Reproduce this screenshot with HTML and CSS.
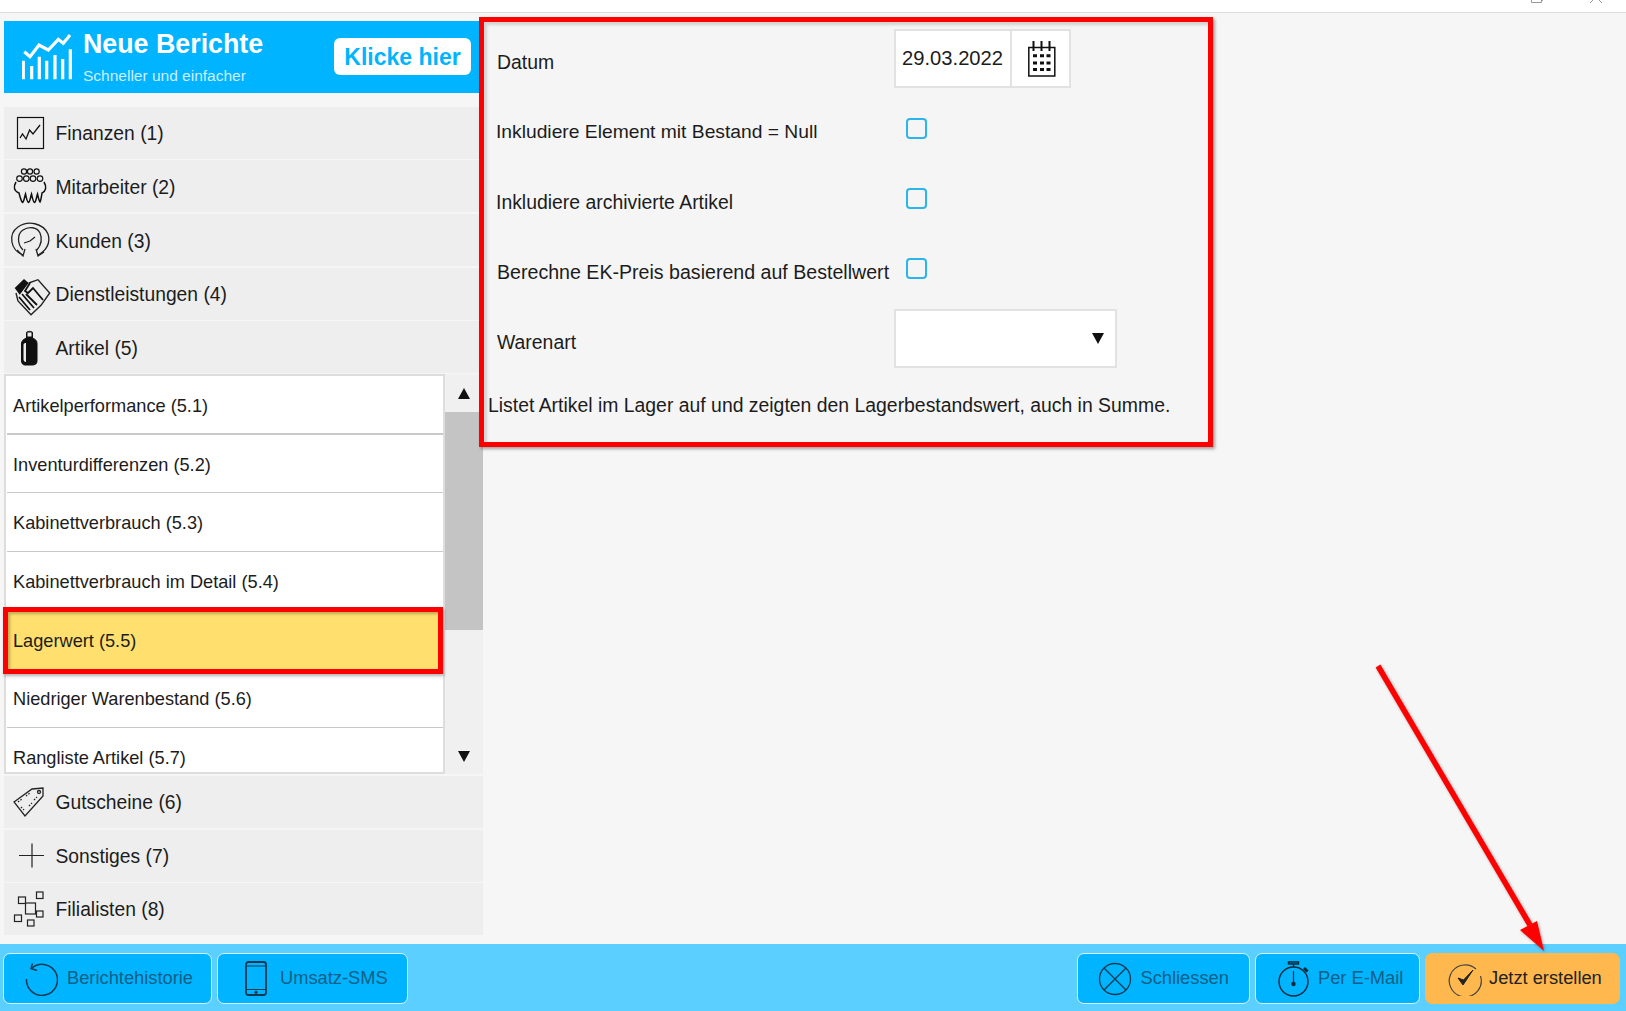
FILE: index.html
```html
<!DOCTYPE html>
<html lang="de">
<head>
<meta charset="utf-8">
<title>Berichte</title>
<link rel="stylesheet" href="styles.css">
</head>
<body>
<div class="page">
  <header class="topbar">
    <svg class="win win-restore" viewBox="0 0 12 3"><path d="M.5 0V2.5H10.5V0M10.5 .5H11.5V0" fill="none" stroke="#999"/></svg>
    <svg class="win win-close" viewBox="0 0 12 3"><path d="M0 3L3 0M12 3L9 0" fill="none" stroke="#999"/></svg>
  </header>

  <main class="main">
    <aside class="sidebar">
      <div class="banner">
        <svg class="banner-icon" viewBox="0 0 52 47" fill="none" stroke="#fff">
          <path d="M2.300 17.700L8 22.700 17 11 26.300 16 36.300 5.300 41.300 9.300 48 1" stroke-width="3.200"/>
          <path d="M1.300 45.300V26.700M9.700 45.300V32M17.300 45.300V22.700M24.700 45.300V26.700M33 45.300V21M40.700 45.300V25M48.300 45.300V15.300" stroke-width="3.200"/>
        </svg>
        <div class="banner-text">
          <div class="banner-title">Neue Berichte</div>
          <div class="banner-sub">Schneller und einfacher</div>
        </div>
        <div class="banner-btn">Klicke hier</div>
      </div>

      <div class="row">
        <svg class="row-icon" viewBox="0 0 48 52" fill="none" stroke="#111">
          <rect x="9.5" y="10.5" width="26" height="31" stroke-width="1.2"/>
          <path d="M12 31L14.5 27 18 32 21.6 23 25 27 32 18" stroke-width="1.3"/>
        </svg>
        <span>Finanzen (1)</span>
      </div>
      <div class="row">
        <svg class="row-icon" viewBox="0 0 48 52" fill="none" stroke="#111" stroke-width="1.2">
          <circle cx="16" cy="11.5" r="2.6"/><circle cx="22" cy="11.5" r="2.6"/><circle cx="28.6" cy="11.5" r="2.6"/>
          <circle cx="11.5" cy="18.6" r="2.8"/><circle cx="18.3" cy="18.6" r="2.8"/><circle cx="25" cy="18.6" r="2.8"/><circle cx="32" cy="18.6" r="2.8"/>
          <path d="M8 22C5 27 6 31 11 33C12 37 13 41 14.500 42.500C16 42 16.500 37 17.500 34C18.500 38 19 42 20.500 42.500C22 42 22.500 37 23.500 34C24.500 38 25 42 26.500 42.500C28 42 28.500 37 29.500 34C30.500 38 31 41 32 42C33 40 33.500 36 34 33C38 31 39 27 36 22" stroke-width="1.500"/>
        </svg>
        <span>Mitarbeiter (2)</span>
      </div>
      <div class="row">
        <svg class="row-icon" viewBox="0 0 48 52" fill="none" stroke="#222" stroke-width="1.3">
          <path d="M15 41C2 36 0 20 10 13 20 6 35 9 40 20 43 29 38 37 30 41"/>
          <path d="M15 36C9 30 9 20 15 16 21 12 29 13 32 19 35 26 33 31 29 36"/>
          <path d="M9 36L15 42 17 35M28 35L30 42 36 38"/>
          <path d="M16 29L22 27 27 23"/>
        </svg>
        <span>Kunden (3)</span>
      </div>
      <div class="row">
        <svg class="row-icon" viewBox="0 0 48 52">
          <path d="M20.700 15L30 11.700 41.700 25 33 37.300 23 46.700 10 33 8 25" fill="#eee" stroke="#222" stroke-width="1.400"/>
          <path d="M22 15L17 23 20 25 25 20 35 32M11 29L22 42M14 26L26 40M18 26L29 37" fill="none" stroke="#111" stroke-width="1.800"/>
          <path d="M6.700 20L16 11 20.700 15 11.700 26.700Z" fill="#111"/>
        </svg>
        <span>Dienstleistungen (4)</span>
      </div>
      <div class="row">
        <svg class="row-icon" viewBox="0 0 48 52">
          <path d="M18.5 11.5C18.5 10 24.5 10 24.5 11.5V17C28 18.5 29 20 29 23V40C29 43 27 44 24 44H17C14.500 44 13.500 42 13.500 40V23C13.500 20 15 18.500 18.500 17Z" fill="#111" stroke="#111"/>
          <path d="M15.500 24V38C15.500 40 16.500 41 18 41V22C16.500 22 15.500 22.500 15.500 24Z" fill="#eee"/>
          <rect x="19.500" y="11.500" width="4" height="4" fill="#eee"/>
        </svg>
        <span>Artikel (5)</span>
      </div>

      <div class="list-wrap">
        <ul class="list">
          <li class="item item-first">Artikelperformance (5.1)</li>
          <li class="item">Inventurdifferenzen (5.2)</li>
          <li class="item">Kabinettverbrauch (5.3)</li>
          <li class="item">Kabinettverbrauch im Detail (5.4)</li>
          <li class="item item-selected">Lagerwert (5.5)</li>
          <li class="item">Niedriger Warenbestand (5.6)</li>
          <li class="item">Rangliste Artikel (5.7)</li>
        </ul>
        <div class="scrollbar">
          <span class="arrow-up"></span>
          <div class="thumb"></div>
          <span class="arrow-down"></span>
        </div>
      </div>

      <div class="row">
        <svg class="row-icon" viewBox="0 0 48 52" fill="none" stroke="#222" stroke-width="1.3">
          <path d="M6 26L24 13 35 12V20L17 40Z"/>
          <circle cx="31" cy="16" r="1.500"/>
          <path d="M10 26L14 23M18 20L22 17M13 31L16 34M21 30L24 27M26 24L29 21" stroke-dasharray="1.500 1.500"/>
        </svg>
        <span>Gutscheine (6)</span>
      </div>
      <div class="row">
        <svg class="row-icon" viewBox="0 0 48 52" fill="none" stroke="#222" stroke-width="1.200">
          <path d="M11 25.500H36M24 13.500V37.500"/>
        </svg>
        <span>Sonstiges (7)</span>
      </div>
      <div class="row">
        <svg class="row-icon" viewBox="0 0 48 52" fill="none" stroke="#222" stroke-width="1.200">
          <rect x="17.500" y="20" width="10" height="11"/>
          <rect x="10.500" y="14" width="7" height="6.500"/>
          <rect x="28.500" y="9" width="6.500" height="6.500"/>
          <rect x="28.500" y="28" width="6.500" height="6"/>
          <rect x="6.500" y="32" width="7" height="6.500"/>
          <rect x="19.500" y="37" width="6.500" height="6"/>
        </svg>
        <span>Filialisten (8)</span>
      </div>
    </aside>

    <section class="panel">
      <div class="form-row">
        <label class="form-label">Datum</label>
        <div class="date-box">
          <span class="date-value">29.03.2022</span>
          <span class="date-btn">
            <svg class="cal-icon" viewBox="0 0 28 36" fill="none" stroke="#111">
              <rect x=".8" y="6.500" width="26" height="28.500" stroke-width="1.500"/>
              <path d="M5.500 0V10M13.500 0V10M21.500 0V10" stroke-width="2"/>
              <path d="M5 14.700H9M12 14.700H16M18.500 14.700H22.500M5 22H9M12 22H16M18.500 22H22.500M5 28.500H9M12 28.500H16M18.500 28.500H22.500" stroke-width="3"/>
            </svg>
          </span>
        </div>
      </div>
      <div class="form-row">
        <label class="form-label form-label-tight">Inkludiere Element mit Bestand = Null</label>
        <span class="check"></span>
      </div>
      <div class="form-row">
        <label class="form-label form-label-shift">Inkludiere archivierte Artikel</label>
        <span class="check"></span>
      </div>
      <div class="form-row">
        <label class="form-label form-label-wide">Berechne EK-Preis basierend auf Bestellwert</label>
        <span class="check"></span>
      </div>
      <div class="form-row">
        <label class="form-label">Warenart</label>
        <div class="select-box"><span class="select-arrow"></span></div>
      </div>
      <p class="form-note">Listet Artikel im Lager auf und zeigten den Lagerbestandswert, auch in Summe.</p>
    </section>
  </main>

  <footer class="footer">
    <div class="btn-group">
      <div class="btn btn-history">
        <svg class="btn-icon icon-history" viewBox="0 0 34 34" fill="none" stroke="#0d3a52" stroke-width="1.500">
          <path d="M8 6A15.500 15.500 0 1 1 2.500 17"/>
          <path d="M8.500 1.500L7 6.500 13 8.500"/>
        </svg>
        <span>Berichtehistorie</span>
      </div>
      <div class="btn btn-sms">
        <svg class="btn-icon icon-phone" viewBox="0 0 22 35" fill="none" stroke="#0d3a52">
          <rect x="1" y="1" width="20" height="33" rx="2.500" stroke-width="1.800"/>
          <path d="M1 5H21M1 28.500H21" stroke-width="1.200"/>
          <circle cx="11" cy="31.300" r="1.200" fill="#0d3a52"/>
        </svg>
        <span>Umsatz-SMS</span>
      </div>
    </div>
    <div class="btn-group">
      <div class="btn btn-close">
        <svg class="btn-icon icon-close" viewBox="0 0 34 34" fill="none" stroke="#0d3a52" stroke-width="1.300">
          <circle cx="17" cy="17" r="15.500"/>
          <path d="M6 6L28 28M28 6L6 28"/>
        </svg>
        <span>Schliessen</span>
      </div>
      <div class="btn btn-mail">
        <svg class="btn-icon icon-watch" viewBox="0 0 32 36" fill="none" stroke="#06293c" stroke-width="1.400">
          <circle cx="15.500" cy="20.500" r="14.500"/>
          <path d="M10.500 1H20.500V3H10.500ZM15.500 3V6"/>
          <path d="M26 7L29.500 10.500" stroke-width="3"/>
          <path d="M15.500 10V24" stroke-width="1.200"/>
          <circle cx="15.500" cy="23" r="1.500" fill="#06293c"/>
        </svg>
        <span>Per E-Mail</span>
      </div>
      <div class="btn btn-create">
        <svg class="btn-icon icon-check" viewBox="0 0 34 34" fill="none" stroke="#444" stroke-width="1.200">
          <path d="M28 7A16 16 0 1 0 32.500 14"/>
          <path d="M10 16L15 23 25 8 15.500 18Z" fill="#222" stroke="#222" stroke-width="1"/>
        </svg>
        <span>Jetzt erstellen</span>
      </div>
    </div>
  </footer>
</div>

<div class="mark-selected"></div>
<svg class="mark-arrow" viewBox="0 0 1626 1011">
  <path d="M1378 666L1530 925" stroke="#f00" stroke-width="5.500" fill="none"/>
  <path d="M1520 930L1537 921 1544 951Z" fill="#f00"/>
</svg>
</body>
</html>
```

FILE: styles.css
```css
* { box-sizing: border-box; }
html, body { margin: 0; padding: 0; }
body {
  width: 1626px;
  height: 1011px;
  overflow: hidden;
  position: relative;
  background: #f6f6f6;
  color: #1c1c1c;
  font-family: "Liberation Sans", Arial, sans-serif;
}
.page { display: flex; flex-direction: column; height: 1011px; }

.topbar {
  height: 13px;
  flex: none;
  background: #fff;
  border-bottom: 1px solid #dcdcdc;
  display: flex;
  justify-content: flex-end;
  align-items: flex-start;
  gap: 47px;
  padding-right: 24px;
}
.win { width: 12px; height: 3px; display: block; }

.main { flex: 1; display: flex; align-items: flex-start; min-height: 0; }
.sidebar { width: 479px; margin-left: 4px; padding-top: 8px; flex: none; }

.banner {
  width: 476px;
  height: 72px;
  background: #00b4ff;
  display: flex;
  align-items: flex-start;
  margin-bottom: 13.7px;
  color: #fff;
}
.banner-icon { width: 52px; height: 47px; margin: 13px 0 0 18px; flex: none; }
.banner-text { margin-left: 9px; padding-top: 8px; flex: none; width: 241px; }
.banner-title { font-size: 26.8px; font-weight: 700; line-height: 31px; }
.banner-sub { font-size: 15.500px; line-height: 19px; margin-top: 5.500px; color: #cfeeff; }
.banner-btn {
  width: 137px;
  height: 37px;
  margin: 17px 0 0 10px;
  background: #fff;
  border-radius: 6px;
  color: #00b4ff;
  font-size: 23px;
  font-weight: 700;
  line-height: 38px;
  text-align: center;
  flex: none;
}

.row {
  height: 52px;
  margin-bottom: 1.67px;
  background: #eee;
  display: flex;
  align-items: center;
  padding-left: 4px;
  font-size: 19.300px;
}
.row span { padding-top: 3px; margin-left: -.5px; }
.list-wrap ~ .row span { padding-top: 2px; }
.row-icon { width: 48px; height: 52px; flex: none; display: block; }

.list-wrap { height: 400px; display: flex; margin-bottom: 2px; margin-top: -1px; background: #eee; }
.list {
  width: 441px;
  flex: none;
  height: 400px;
  margin: 0;
  padding: 0;
  list-style: none;
  overflow: hidden;
  background: #fff;
  border: 2px solid #ddd;
  font-size: 18.200px;
}
.item {
  height: 58.700px;
  margin: 0 0 0 1px;
  padding-left: 6px;
  line-height: 60.500px;
  border-bottom: 1.200px solid #c9c9c9;
  color: #1c1c1c;
}
.item-first { border-bottom-width: 2px; }
.item-selected { background: #ffe06e; border-bottom: 0; }

.scrollbar { flex: 1; position: relative; background: #f0f0f0; }
.thumb { position: absolute; left: 0; right: 0; top: 38px; height: 218px; background: #c4c4c4; }
.arrow-up, .arrow-down { position: absolute; left: 13px; width: 0; height: 0; border-left: 6.500px solid transparent; border-right: 6.500px solid transparent; }
.arrow-up { top: 14px; border-bottom: 11px solid #111; }
.arrow-down { top: 377px; border-top: 11px solid #111; }

.panel {
  width: 734px;
  height: 430px;
  margin: 4px 0 0 -4px;
  position: relative;
  z-index: 1;
  flex: none;
  padding: 5px 0 0 13px;
  background: #f5f5f5;
  border: 5px solid #f00;
  box-shadow: 2px 2px 3px rgba(0,0,0,.35), inset 3px 3px 3px rgba(0,0,0,.14);
  font-size: 19.400px;
}
.form-row { height: 70px; display: flex; align-items: flex-start; }
.form-label { width: 397px; line-height: 70px; flex: none; white-space: nowrap; }
.form-label-tight { font-size: 19.250px; margin-left: -1px; margin-right: 1px; }
.form-label-shift { margin-left: -1px; margin-right: 1px; }
.form-label-wide { font-size: 19.600px; }

.date-box {
  width: 177px;
  height: 59px;
  margin-top: 2px;
  background: #fff;
  border: 2px solid #e2e2e2;
  display: flex;
}
.date-value { width: 116px; flex: none; padding-left: 6px; font-size: 20.200px; line-height: 54px; border-right: 2px solid #e2e2e2; }
.date-btn { flex: 1; display: flex; align-items: center; padding-left: 16px; }
.cal-icon { width: 28px; height: 36px; display: block; }

.check {
  width: 21px;
  height: 21px;
  margin-top: 21px;
  margin-left: 12px;
  flex: none;
  border: 2px solid #2bb5ea;
  border-radius: 4px;
  background: #f5f5f5;
}
.select-box {
  width: 223px;
  height: 59px;
  margin-top: 2px;
  background: #fff;
  border: 2px solid #e2e2e2;
  position: relative;
}
.select-arrow {
  position: absolute;
  right: 11px;
  top: 22px;
  width: 0;
  height: 0;
  border-left: 6.500px solid transparent;
  border-right: 6.500px solid transparent;
  border-top: 11px solid #111;
}
.form-note { margin: 0 0 0 -9px; line-height: 56px; white-space: nowrap; }

.footer {
  height: 67px;
  flex: none;
  background: #5bcfff;
  display: flex;
  justify-content: space-between;
  padding: 9px 6px 7px 3px;
}
.btn-group { display: flex; gap: 5px; }
.btn {
  height: 51px;
  display: flex;
  align-items: center;
  background: #00b4ff;
  border: 1.500px solid #d8f3ff;
  border-radius: 7px;
  color: #0d5f86;
  font-size: 18.300px;
  white-space: nowrap;
}
.btn span { padding-bottom: 2px; }
.btn-icon { display: block; flex: none; }
.btn-history { width: 209px; padding-left: 20px; gap: 9px; }
.icon-history { width: 34px; height: 34px; }
.btn-sms { width: 191px; padding-left: 27px; gap: 13px; }
.icon-phone { width: 22px; height: 35px; }
.btn-close { width: 173px; padding-left: 19.500px; gap: 9px; }
.icon-close { width: 34px; height: 34px; }
.btn-mail { width: 165px; padding-left: 22px; gap: 8px; }
.icon-watch { width: 32px; height: 36px; }
.btn-create { width: 195px; padding-left: 21.500px; gap: 7.500px; background: #ffb84d; border-color: #ffb84d; color: #222; }
.icon-check { width: 34px; height: 34px; }

.mark-selected {
  position: absolute;
  left: 3px;
  top: 607px;
  width: 440px;
  height: 67px;
  border: 5px solid #f00;
  box-shadow: 1px 2px 3px rgba(0,0,0,.3), inset 2px 2px 3px rgba(0,0,0,.25);
}
.mark-arrow {
  position: absolute;
  left: 0;
  top: 0;
  width: 1626px;
  height: 1011px;
  pointer-events: none;
  filter: drop-shadow(1.500px 1.500px 1.500px rgba(0,0,0,.35));
}
```
